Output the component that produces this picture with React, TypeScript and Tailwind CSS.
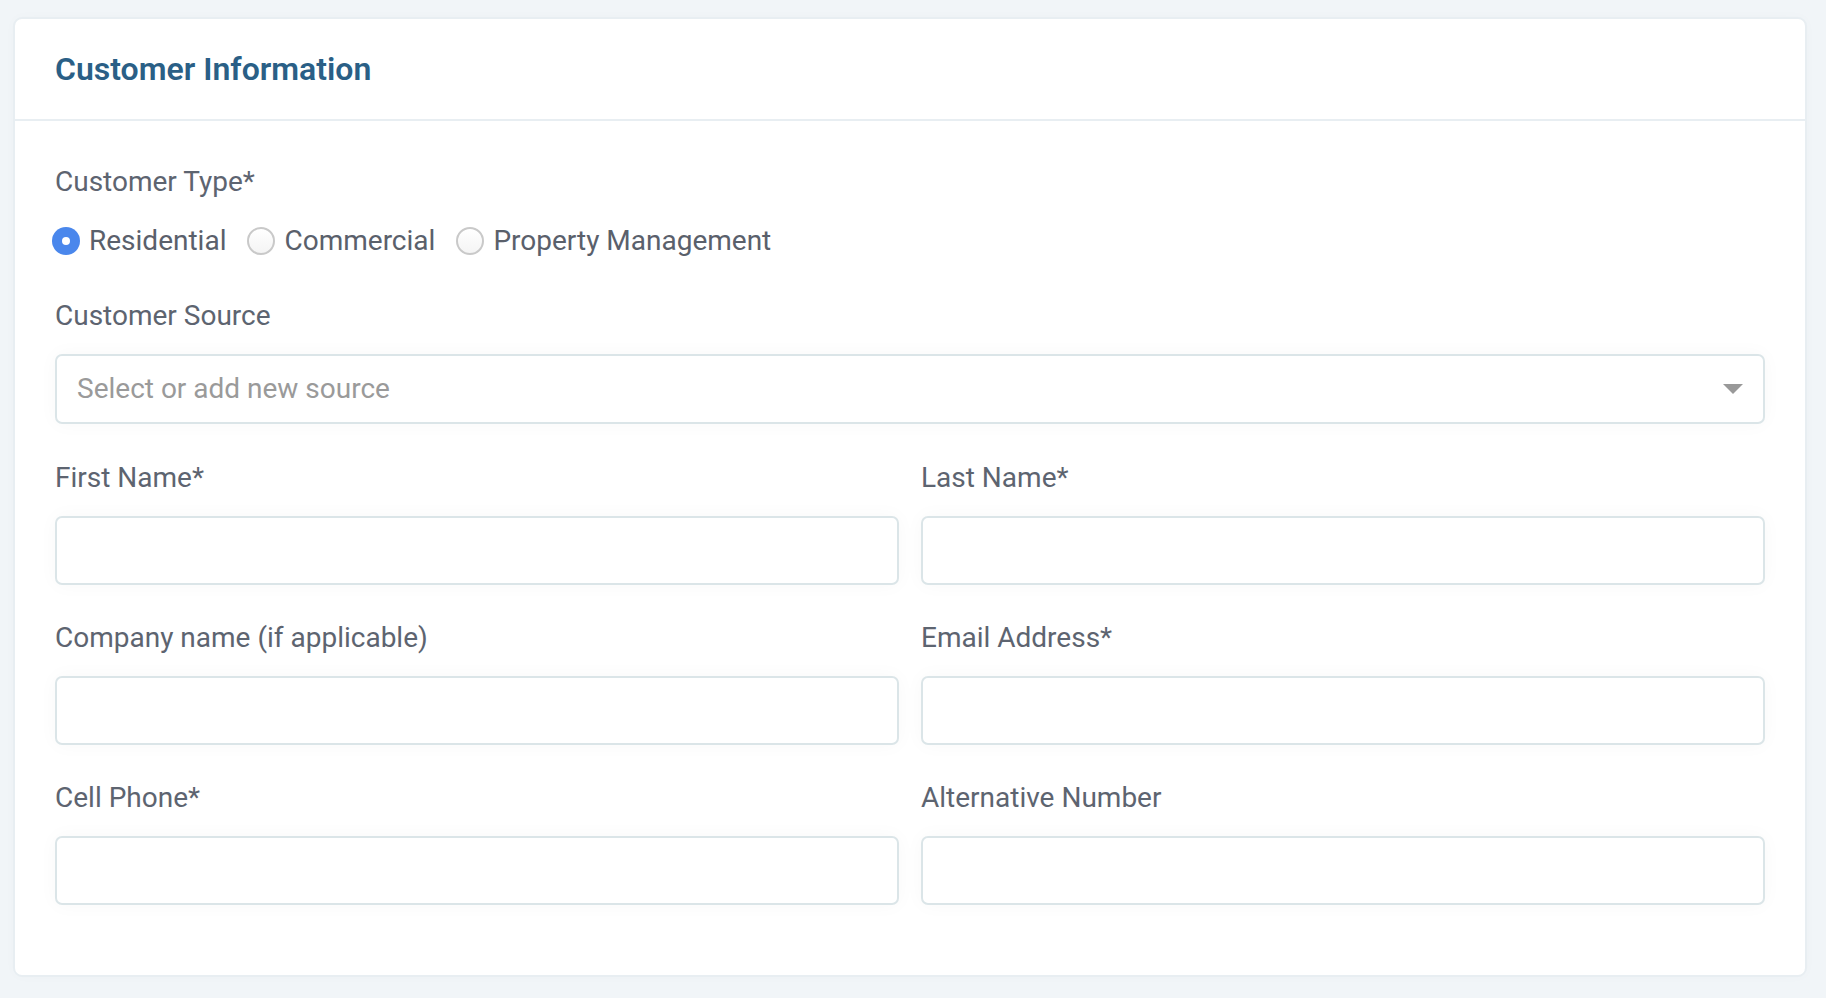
import { useState } from 'react'

const font = { fontFamily: 'Roboto, "Liberation Sans", sans-serif' }

function Field({ label }: { label: string }) {
  return (
    <div className="flex flex-col">
      <label className="text-[28px] leading-[32px] text-[#5d6470] mb-[22px]">{label}</label>
      <input
        type="text"
        className="h-[69px] w-full rounded-[7px] border-2 border-[#dbe5e8] bg-white px-5 text-[28px] outline-none shadow-[0_0_20px_rgba(0,0,0,0.03)]"
      />
    </div>
  )
}

function Radio({ label, checked, onClick }: { label: string; checked: boolean; onClick: () => void }) {
  return (
    <button type="button" onClick={onClick} className="flex items-center gap-[9px]">
      {checked ? (
        <span className="flex h-[28px] w-[28px] items-center justify-center rounded-full bg-[#4a87ec]">
          <span className="h-[8px] w-[8px] rounded-full bg-white" />
        </span>
      ) : (
        <span className="h-[28px] w-[28px] rounded-full border-2 border-[#c9c9c9] bg-gradient-to-b from-white to-[#f4f4f4]" />
      )}
      <span className="text-[28px] leading-[32px] text-[#5a606b]">{label}</span>
    </button>
  )
}

export default function App() {
  const [type, setType] = useState('Residential')

  return (
    <div className="min-h-[998px] bg-[#f1f5f8] pl-[13px] pr-[19px] pt-[17px] pb-[19px]" style={font}>
      <div className="rounded-[9px] border-2 border-[#e8eef2] bg-white shadow-[0_0_12px_rgba(0,0,0,0.02)]">
        {/* Header */}
        <div className="flex h-[102px] items-center border-b-2 border-[#e8eef2] px-[40px]">
          <h2 className="text-[32px] font-semibold text-[#2a5f86]">Customer Information</h2>
        </div>

        {/* Body */}
        <div className="px-[40px] pt-[45px] pb-[70px]">
          <div className="text-[28px] leading-[32px] text-[#5d6470]">Customer Type*</div>
          <div className="-ml-[3px] mt-[27px] flex items-center gap-[21px]">
            {['Residential', 'Commercial', 'Property Management'].map(t => (
              <Radio key={t} label={t} checked={type === t} onClick={() => setType(t)} />
            ))}
          </div>

          <div className="mt-[43px] text-[28px] leading-[32px] text-[#5d6470]">Customer Source</div>
          <div className="mt-[22px] flex h-[70px] items-center justify-between rounded-[7px] border-2 border-[#dbe5e8] bg-white pl-[20px] pr-[20px] shadow-[0_0_20px_rgba(0,0,0,0.03)]">
            <span className="text-[28px] text-[#9a9a9a]">Select or add new source</span>
            <svg width="20" height="10" viewBox="0 0 20 10">
              <path d="M0 0h20L10 10z" fill="#999" />
            </svg>
          </div>

          <div className="mt-[38px] grid grid-cols-2 gap-x-[22px] gap-y-[37px]">
            <Field label="First Name*" />
            <Field label="Last Name*" />
            <Field label="Company name (if applicable)" />
            <Field label="Email Address*" />
            <Field label="Cell Phone*" />
            <Field label="Alternative Number" />
          </div>
        </div>
      </div>
    </div>
  )
}
